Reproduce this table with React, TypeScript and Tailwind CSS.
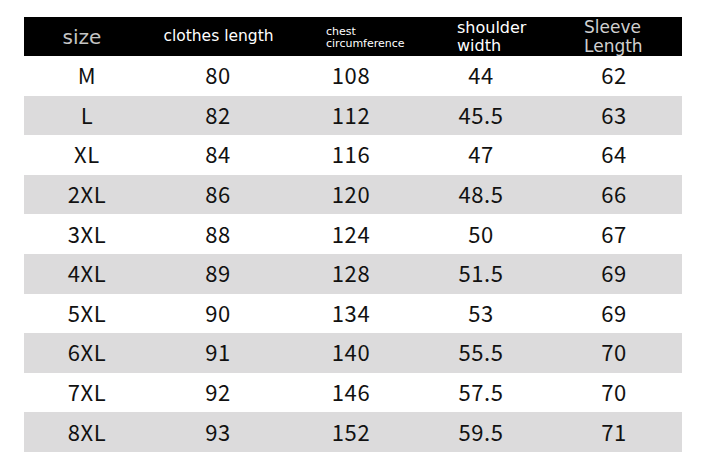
const rows: string[][] = [
  ["M", "80", "108", "44", "62"],
  ["L", "82", "112", "45.5", "63"],
  ["XL", "84", "116", "47", "64"],
  ["2XL", "86", "120", "48.5", "66"],
  ["3XL", "88", "124", "50", "67"],
  ["4XL", "89", "128", "51.5", "69"],
  ["5XL", "90", "134", "53", "69"],
  ["6XL", "91", "140", "55.5", "70"],
  ["7XL", "92", "146", "57.5", "70"],
  ["8XL", "93", "152", "59.5", "71"],
];

const cols = "grid grid-cols-[126px_136px_130px_130px_136px]";

export default function App() {
  return (
    <div className="w-[715px] h-[463px] bg-white pt-[17px] pl-[24px]">
      <div className="w-[658px]">
        {/* header */}
        <div
          className={`${cols} h-[39px] bg-black items-center text-white`}
          style={{ fontFamily: "'DejaVu Sans', sans-serif" }}
        >
          <div className="text-center text-[20px] text-[#c4c4c4] pr-[10px]">size</div>
          <div className="text-center text-[15.5px] pl-[1px]">clothes length</div>
          <div className="text-[11px] leading-[12px] pl-[40px] pt-[2px]">
            chest
            <br />
            circumference
          </div>
          <div className="text-[16px] leading-[18px] pl-[41px] pt-[1px]">
            shoulder
            <br />
            width
          </div>
          <div className="text-[17px] leading-[19px] pl-[38px] text-[#d0d0d0]">
            Sleeve
            <br />
            Length
          </div>
        </div>
        {/* rows */}
        <div style={{ fontFamily: "'Noto Sans CJK SC', 'Noto Sans', sans-serif" }}>
          {rows.map((r, i) => (
            <div
              key={r[0]}
              className={`${cols} h-[39.6px] items-center text-[22px] tracking-[0.6px] text-[#111] ${
                i % 2 === 1 ? "bg-[#dcdbdc]" : "bg-white"
              }`}
            >
              {r.map((c, j) => (
                <div key={j} className="text-center leading-none pb-[3px]">
                  {c}
                </div>
              ))}
            </div>
          ))}
        </div>
      </div>
    </div>
  );
}
